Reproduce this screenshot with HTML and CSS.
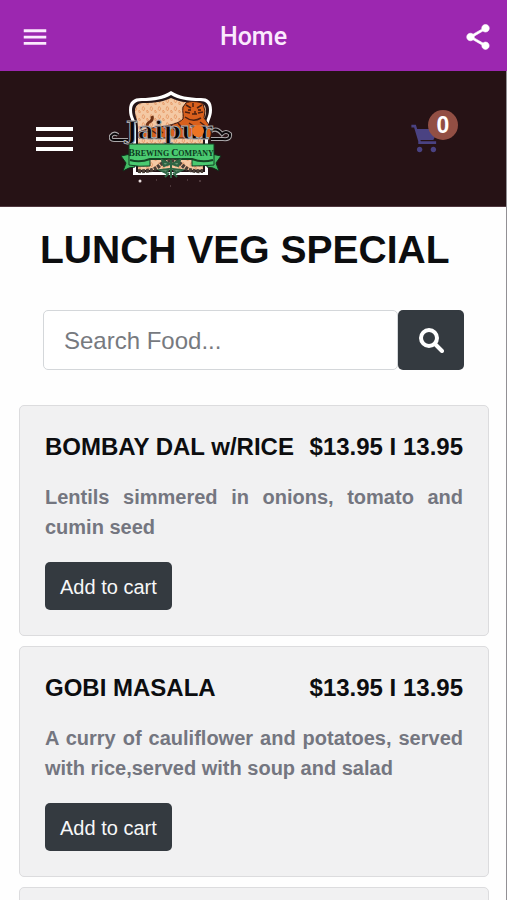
FILE: index.html
```html
<!DOCTYPE html>
<html lang="en">
<head>
<meta charset="utf-8">
<meta name="viewport" content="width=device-width, initial-scale=1">
<title>Home</title>
<link rel="stylesheet" href="styles.css">
</head>
<body>
<header class="app-bar">
  <button class="app-button" type="button" aria-label="Open menu">
    <svg width="30" height="30" viewBox="0 0 24 24" fill="currentColor"><path d="M3 18.200h18v-2.300H3v2.300zm0-5h18v-2.300H3v2.300zm0-7.400v2.300h18V5.800H3z"/></svg>
  </button>
  <div class="app-title">Home</div>
  <button class="app-button app-button-end" type="button" aria-label="Share">
    <svg width="30" height="30" viewBox="0 0 24 24" fill="currentColor" stroke="currentColor" stroke-width=".5"><path d="M18 16.08c-.76 0-1.44.3-1.96.77L8.91 12.7c.05-.23.09-.46.09-.7s-.04-.47-.09-.7l7.05-4.11c.54.5 1.25.81 2.04.81 1.66 0 3-1.34 3-3s-1.34-3-3-3-3 1.34-3 3c0 .24.04.47.09.7L8.04 9.81C7.5 9.31 6.79 9 6 9c-1.66 0-3 1.34-3 3s1.34 3 3 3c.79 0 1.5-.31 2.04-.81l7.12 4.16c-.05.21-.08.43-.08.65 0 1.61 1.31 2.92 2.92 2.92s2.92-1.31 2.92-2.92-1.31-2.92-2.92-2.92z"/></svg>
  </button>
</header>
<div class="page">
  <nav class="site-nav">
    <button class="nav-toggle" type="button" aria-label="Toggle navigation">
      <span class="bar"></span><span class="bar"></span><span class="bar"></span>
    </button>
    <a class="brand" href="#" aria-label="Jaipur Brewing Company">
      <svg width="124" height="100" viewBox="0 0 124 100">
        <defs>
          <pattern id="paisley" width="8" height="8" patternUnits="userSpaceOnUse">
            <rect width="8" height="8" fill="#f4c9a4"/>
            <path d="M2 1.500q3 1 1 4q-3 0-1-4M6 5q2 1 1 3q-2 0-1-3" fill="none" stroke="#e69a68" stroke-width=".9"/>
          </pattern>
        </defs>
        <path d="M24 86V40C24 31 20 30 20 21C20 12 25 9 32 9C45 9 54 7 62 2C70 7 79 9 92 9C99 9 103 12 103 21C103 29 99 31 99 40V86Z" fill="#fff"/>
        <path d="M27 83V40C27 30 23 29 23 21C23 15 27 12 33 12C46 12 55 10 62 6C69 10 78 12 91 12C97 12 100 15 100 21C100 28 96 31 96 40V83Z" fill="#241518"/>
        <path d="M29 81V40C29 30 26 28 26 22C26 17 29 14 34 14C47 14 56 12 62 9C68 12 77 14 90 14C95 14 97 17 97 22C97 28 94 31 94 40V81Z" fill="url(#paisley)"/>
        <path d="M30 43C39 39 49 38 57 37C65 35 70 34 74 30C75 26 73 23 74 18L77 14C80 12 90 12 94 15L96 22L95 29C101 36 104 44 101 49H30Z" fill="#d9601d" stroke="#3b1a12" stroke-width="1"/>
        <path d="M39 40Q36 35 42 32Q44 30 43 27" fill="none" stroke="#6d3014" stroke-width="3"/>
        <path d="M36 42l5 3M42 41l6 4M48 39l6 5M55 38l6 6M62 36l6 8M69 34l7 8M76 28q8 6 16 1M80 34l9 6M91 33l8 6M77 16l5 3M93 16l-5 3M84 14v4M76 23l5 1M94 23l-5 1M83 25h5M86 22v3" fill="none" stroke="#4e2112" stroke-width="1.500"/>
        <path d="M79 21h3M89 21h3" stroke="#3b1a12" stroke-width="1.500"/>
        <path d="M19 51H5Q1 51 2 47Q5 43 9 46M102 50H114Q122 51 121 45Q117 41 113 45Q108 38 102 42" fill="none" stroke="#aaa7a9" stroke-width="4"/>
        <path d="M19 51H5Q1 51 2 47Q5 43 9 46M102 50H114Q122 51 121 45Q117 41 113 45Q108 38 102 42" fill="none" stroke="#080608" stroke-width="2"/>
        <text class="logo-name" x="17" y="50">Jaipur</text>
        <circle cx="89" cy="42" r="6" fill="#ed7424"/>
        <path d="M12 67L26 64V78Q20 78 14 82L17 74ZM112 67L98 64V78Q104 78 110 82L107 74Z" fill="#43bb64" stroke="#102d1b" stroke-width="1"/>
        <path d="M20 55H105V76Q93 77 83 77V70H41V77Q30 78 20 76Z" fill="#4aca70" stroke="#123c22" stroke-width="1"/>
        <path d="M21 71Q31 74 41 70H83Q93 74 104 71" fill="none" stroke="#154424" stroke-width="2"/>
        <text class="logo-company" x="62" y="67"><tspan class="logo-initial">B</tspan>REWING <tspan class="logo-initial">C</tspan>OMPANY</text>
        <path d="M29 82Q44 83 50 77Q62 66 74 77Q80 83 94 82" fill="none" stroke="#4a4038" stroke-width="4" stroke-dasharray="3 1"/>
        <path d="M62 71v18M61 75l-8-4 2 6zM63 75l8-4-2 6zM60 80l-9 1 6 3zM64 80l9 1-6 3zM60 84l-4 4M64 84l4 4" fill="#739c79" stroke="#2e6544" stroke-width="2"/>
        <circle cx="31" cy="92" r="1.500" fill="#e9dedf"/>
        <path d="M47 91h1M61 97h1M78 91h1M90 92h2" stroke="#755d61" stroke-width="1"/>
      </svg>
    </a>
    <a class="cart" href="#" aria-label="Cart, 0 items">
      <svg width="33" height="33" viewBox="0 0 24 24" fill="currentColor"><path d="M7 18c-1.100 0-1.990.9-1.990 2S5.900 22 7 22s2-.9 2-2-.9-2-2-2zM1 2v2h2l3 10v2h13v-2H8l-.5-1H17L20.880 5H5.210L4.270 2H1zm16 16c-1.100 0-1.990.9-1.990 2s.89 2 1.990 2 2-.9 2-2-.9-2-2-2z"/></svg>
      <span class="badge">0</span>
    </a>
  </nav>
  <main>
    <h1 class="page-title">LUNCH VEG SPECIAL</h1>
    <form class="search" role="search">
      <input class="search-input" type="search" placeholder="Search Food..." aria-label="Search food">
      <button class="search-button" type="button" aria-label="Search">
        <svg width="25" height="25" viewBox="0 0 25 25" fill="none" stroke="currentColor"><circle cx="10" cy="10" r="8" stroke-width="4"/><path d="M16 16l7 7" stroke-width="4" stroke-linecap="round"/></svg>
      </button>
    </form>
    <section class="menu-list" aria-label="Menu">
      <article class="card">
        <div class="card-head"><h2>BOMBAY DAL w/RICE</h2><span>$13.95 I 13.95</span></div>
        <p class="description">Lentils simmered in onions, tomato and cumin seed</p>
        <button class="add-button" type="button">Add to cart</button>
      </article>
      <article class="card">
        <div class="card-head"><h2>GOBI MASALA</h2><span>$13.95 I 13.95</span></div>
        <p class="description">A curry of cauliflower and potatoes, served with rice,served with soup and salad</p>
        <button class="add-button" type="button">Add to cart</button>
      </article>
      <article class="card"></article>
    </section>
  </main>
</div>
</body>
</html>
```
FILE: styles.css
```css
* { box-sizing: border-box; }

html { height: 100%; }

body {
  display: flex;
  flex-direction: column;
  height: 100%;
  margin: 0;
  overflow: hidden;
  background: #fff;
  color: #0c0d0f;
  font-family: "Liberation Sans", Arial, sans-serif;
}

button {
  border: 0;
  font: inherit;
  cursor: pointer;
}

svg { display: block; flex: none; }

.app-bar {
  display: grid;
  grid-template-columns: 64px 1fr 64px;
  flex: none;
  align-items: center;
  height: 71px;
  padding-top: 2px;
  background: #9c27b0;
  color: #fbeafd;
}

.app-button {
  display: flex;
  padding: 0 0 0 20px;
  background: none;
  color: inherit;
}

.app-button-end {
  justify-content: flex-end;
  padding: 0 14px 0 0;
  color: #fff;
}

.app-title {
  font: 500 25px/32px Roboto, sans-serif;
  text-align: center;
}

.page {
  flex: 1;
  min-height: 0;
  overflow: hidden;
  border-right: 1px solid #929094;
  background: #fefefe;
}

.site-nav {
  display: flex;
  align-items: center;
  height: 136px;
  padding: 0 48px 0 36px;
  border-bottom: 1px solid #50383f;
  background: #261215;
}

.nav-toggle {
  display: grid;
  gap: 6px;
  width: 37px;
  padding: 0;
  background: none;
}

.bar {
  height: 4px;
  background: #fff;
}

.brand { margin-left: 36px; }

.cart {
  position: relative;
  width: 48px;
  margin-left: auto;
  color: #4a4282;
}

.badge {
  position: absolute;
  top: -12px;
  right: 0;
  width: 30px;
  height: 30px;
  border-radius: 50%;
  background: #924f44;
  color: #fff;
  font-size: 23px;
  font-weight: 700;
  line-height: 30px;
  text-align: center;
}

.logo-name {
  fill: #080608;
  stroke: #aaa7a9;
  stroke-width: 1px;
  font: 700 25px "DejaVu Serif", serif;
}

.logo-company {
  fill: #0d3a1e;
  font: 700 8px "Liberation Serif", serif;
  text-anchor: middle;
}

.logo-initial { font-size: 10px; }

.page-title {
  margin: 19px 40px 0;
  font-size: 39px;
  line-height: 48px;
}

.search {
  display: flex;
  margin: 36px 42px 35px 43px;
}

.search-input {
  flex: 1;
  min-width: 0;
  height: 60px;
  padding: 2px 20px 0;
  border: 1px solid #d4d7da;
  border-radius: 5px;
  background: #fff;
  color: #343a40;
  font: 24px "Liberation Sans", Arial, sans-serif;
}

.search-input::placeholder { color: #777a7f; opacity: 1; }

.search-button {
  display: grid;
  place-items: center;
  width: 66px;
  border-radius: 5px;
  background: #343a40;
  color: #fff;
}

.menu-list {
  display: grid;
  gap: 10px;
  padding: 0 17px 10px 19px;
}

.card {
  min-height: 60px;
  padding: 26px 25px 25px;
  border: 1px solid #dcdcde;
  border-radius: 5px;
  background: #f1f1f2;
}

.card-head {
  display: flex;
  justify-content: space-between;
  font-size: 24px;
  font-weight: 700;
  line-height: 30px;
}

.card-head h2 {
  margin: 0;
  font: inherit;
}

.card-head span { white-space: nowrap; }

.description {
  margin: 20px 0;
  color: #747680;
  font-size: 20px;
  font-weight: 700;
  line-height: 30px;
  text-align: justify;
}

.add-button {
  display: block;
  height: 48px;
  padding: 2px 15px 0;
  border-radius: 5px;
  background: #343a40;
  color: #f7f7f8;
  font-size: 20px;
}
```
